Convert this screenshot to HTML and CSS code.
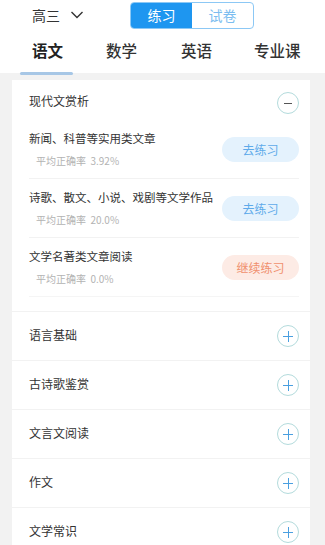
FILE: index.html
```html
<!DOCTYPE html>
<html lang="zh">
  <head>
    <meta charset="UTF-8" />
    <title>练习</title>
    <link rel="stylesheet" href="styles.css">
  </head>
  <body>
    <div class="header">
      <div class="top-row">
        <div class="grade">高三
          <svg width="14" height="10" viewBox="0 0 14 10"><path d="M1.5 2 L7 7.5 L12.5 2" fill="none" stroke="#333" stroke-width="1.4"/></svg>
        </div>
        <div class="toggle">
          <span class="toggle-item active">练习</span>
          <span class="toggle-item">试卷</span>
        </div>
      </div>
      <div class="tabs">
        <div class="tab active">语文</div>
        <div class="tab">数学</div>
        <div class="tab">英语</div>
        <div class="tab">专业课</div>
      </div>
    </div>

    <div class="content">
      <div class="card">
        <div class="section open">
          <div class="section-head">
            <span>现代文赏析</span>
            <span class="circle minus"></span>
          </div>
          <div class="item">
            <div class="item-text">
              <div class="item-title">新闻、科普等实用类文章</div>
              <div class="item-sub">平均正确率&nbsp;&nbsp;3.92%</div>
            </div>
            <div class="btn">去练习</div>
          </div>
          <div class="item">
            <div class="item-text">
              <div class="item-title">诗歌、散文、小说、戏剧等文学作品</div>
              <div class="item-sub">平均正确率&nbsp;&nbsp;20.0%</div>
            </div>
            <div class="btn">去练习</div>
          </div>
          <div class="item">
            <div class="item-text">
              <div class="item-title">文学名著类文章阅读</div>
              <div class="item-sub">平均正确率&nbsp;&nbsp;0.0%</div>
            </div>
            <div class="btn orange">继续练习</div>
          </div>
        </div>
        <div class="row"><span>语言基础</span><span class="circle plus"></span></div>
        <div class="row"><span>古诗歌鉴赏</span><span class="circle plus"></span></div>
        <div class="row"><span>文言文阅读</span><span class="circle plus"></span></div>
        <div class="row"><span>作文</span><span class="circle plus"></span></div>
        <div class="row"><span>文学常识</span><span class="circle plus"></span></div>
      </div>
    </div>
  </body>
</html>
```

FILE: styles.css
```css
body {
  margin: 0;
  font-family: "Noto Sans CJK SC", "Noto Sans", sans-serif;
  background-color: #f2f2f2;
  color: #333;
  overflow: hidden;
}
.header {
  background-color: #fff;
  height: 73px;
}
.top-row {
  height: 32px;
  display: flex;
  align-items: center;
}
.grade {
  margin-left: 32px;
  margin-top: -2px;
  font-size: 14px;
  display: flex;
  align-items: center;
  gap: 10px;
}
.toggle {
  margin-left: 46px;
  margin-top: -2px;
  width: 124px;
  height: 27px;
  box-sizing: border-box;
  border: 1px solid #8cc8f5;
  border-radius: 4px;
  display: flex;
  overflow: hidden;
}
.toggle-item {
  flex: 1;
  text-align: center;
  line-height: 25px;
  font-size: 14px;
  color: #7bbdf0;
}
.toggle-item.active {
  background-color: #1e96f0;
  color: #fff;
}
.tabs {
  display: flex;
  height: 41px;
}
.tab {
  font-size: 15.5px;
  font-weight: 500;
  color: #333;
  line-height: 36px;
  position: relative;
}
.tab:nth-child(1) { margin-left: 32px; }
.tab:nth-child(2) { margin-left: 43px; }
.tab:nth-child(3) { margin-left: 44px; }
.tab:nth-child(4) { margin-left: 42px; }
.tab.active {
  color: #222;
  font-weight: 700;
}
.tab.active::after {
  content: "";
  position: absolute;
  left: -12px;
  right: -10px;
  bottom: -2px;
  height: 3px;
  border-radius: 2px;
  background-color: #a7c7e6;
}
.content {
  padding: 7px 15px 0 12px;
}
.card {
  background-color: #fff;
}
.section-head,
.row {
  display: flex;
  justify-content: space-between;
  align-items: center;
  padding: 0 11px 0 17px;
  font-size: 12px;
  color: #333;
}
.section-head {
  height: 40px;
  padding-top: 6px;
  box-sizing: border-box;
}
.section-head span:first-child {
  margin-top: -6px;
}
.item {
  margin: 0 11px 0 17px;
  height: 58px;
  display: flex;
  justify-content: space-between;
  align-items: center;
  border-bottom: 1px solid #f2f2f2;
}
.item:last-child {
  border-bottom: 1px solid #f5f5f5;
}
.section {
  padding-bottom: 14px;
  border-bottom: 1px solid #f2f2f2;
}
.item-title {
  font-size: 11.5px;
  line-height: 17px;
  white-space: nowrap;
  color: #333;
}
.item-sub {
  font-size: 10px;
  line-height: 15px;
  color: #b3b3b3;
  margin-top: 6px;
  margin-left: 7px;
}
.btn {
  width: 77px;
  height: 25px;
  border-radius: 13px;
  background-color: #e4f2fd;
  color: #5eaaea;
  font-size: 12px;
  text-align: center;
  line-height: 25px;
}
.btn.orange {
  background-color: #fdebe5;
  color: #f0906e;
}
.row {
  height: 48px;
  border-bottom: 1px solid #f2f2f2;
}
.row span:first-child {
  margin-top: -4px;
}
.row:last-child {
  border-bottom: none;
}
.circle {
  width: 22px;
  height: 22px;
  box-sizing: border-box;
  border: 1px solid #b3dbdc;
  border-radius: 50%;
  position: relative;
}
.circle::before,
.circle::after {
  content: "";
  position: absolute;
  background-color: #4a9fe0;
  left: 5px;
  right: 5px;
  top: 9.5px;
  height: 1.5px;
}
.circle.minus::before {
  background-color: #555;
  left: 6px;
  right: 6px;
}
.circle.minus::after {
  display: none;
}
.circle.plus::after {
  left: 9.5px;
  width: 1.5px;
  right: auto;
  top: 5px;
  height: 11px;
}
```
